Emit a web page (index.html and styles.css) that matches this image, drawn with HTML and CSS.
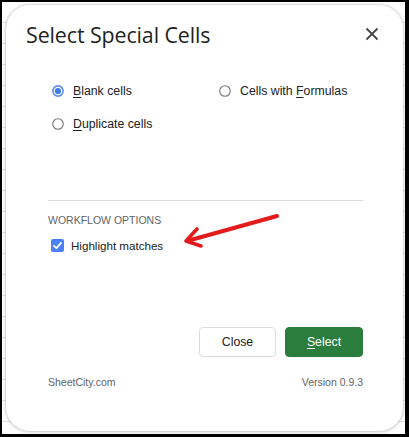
FILE: index.html
```html
<!DOCTYPE html>
<html>
<head>
<meta charset="utf-8">
<link rel="stylesheet" href="styles.css">
</head>
<body>
<div class="sheet">
  <div class="dialog">
    <div class="header">
      <h1 class="title">Select Special Cells</h1>
      <button class="close-x" aria-label="Close">
        <svg width="14" height="14" viewBox="0 0 14 14"><path d="M1.5 1.5 L12.5 12.5 M12.5 1.5 L1.5 12.5" stroke="#444746" stroke-width="1.8" fill="none"/></svg>
      </button>
    </div>
    <div class="body">
      <div class="options">
        <label class="opt">
          <svg class="radio" width="12" height="12" viewBox="0 0 12 12"><circle cx="6" cy="6" r="5.1" fill="#fff" stroke="#5b8def" stroke-width="1.6"/><circle cx="6" cy="6" r="3.1" fill="#3f7cf2"/></svg>
          <span><u>B</u>lank cells</span>
        </label>
        <label class="opt">
          <svg class="radio" width="12" height="12" viewBox="0 0 12 12"><circle cx="6" cy="6" r="5.3" fill="#fff" stroke="#767676" stroke-width="1.1"/></svg>
          <span>Cells with <u>F</u>ormulas</span>
        </label>
        <label class="opt">
          <svg class="radio" width="12" height="12" viewBox="0 0 12 12"><circle cx="6" cy="6" r="5.3" fill="#fff" stroke="#767676" stroke-width="1.1"/></svg>
          <span><u>D</u>uplicate cells</span>
        </label>
      </div>
      <div class="divider"></div>
      <div class="section-label">WORKFLOW OPTIONS</div>
      <label class="check-row">
        <svg class="check" width="13" height="13" viewBox="0 0 13 13"><rect x="0" y="0" width="13" height="13" rx="2" fill="#4a80f5"/><path d="M3 6.8 L5.4 9.1 L10 3.9" stroke="#fff" stroke-width="1.8" fill="none" stroke-linecap="round" stroke-linejoin="round"/></svg>
        <span>Highlight matches</span>
      </label>
      <div class="actions">
        <button class="btn btn-close">Close</button>
        <button class="btn btn-select"><u>S</u>elect</button>
      </div>
      <div class="footer">
        <span>SheetCity.com</span>
        <span>Version 0.9.3</span>
      </div>
    </div>
    <svg class="arrow" width="104" height="46" viewBox="0 0 104 46">
      <path d="M97 8 L7 33" stroke="#e31b1b" stroke-width="4" stroke-linecap="round" fill="none"/>
      <path d="M17 21 L6 33 L21 38" stroke="#e31b1b" stroke-width="3.6" stroke-linecap="round" stroke-linejoin="round" fill="none"/>
    </svg>
  </div>
</div>
</body>
</html>
```

FILE: styles.css
```css
html, body {
  margin: 0;
  padding: 0;
  background: #000;
}
body {
  width: 409px;
  height: 437px;
  overflow: hidden;
  font-family: "Liberation Sans", Arial, sans-serif;
}
.sheet {
  margin: 2px 4px 3px 2px;
  width: 403px;
  height: 432px;
  box-sizing: border-box;
  padding: 3px 2px 3px 4px;
  background-color: #fff;
  background-image: repeating-linear-gradient(to bottom, transparent 0, transparent 20px, #e2e2e2 20px, #e2e2e2 21px);
}
.dialog {
  position: relative;
  width: 397px;
  height: 426px;
  background: #fff;
  border-radius: 24px;
  box-shadow: 0 0 3px rgba(0,0,0,0.25), 0 1px 4px rgba(0,0,0,0.12);
  display: flex;
  flex-direction: column;
}
.header {
  height: 58px;
  display: flex;
  align-items: center;
  justify-content: space-between;
  padding: 0 24px 0 20px;
}
.title {
  margin: 0;
  font-family: "Open Sans", sans-serif;
  font-weight: 400;
  font-size: 21.4px;
  color: #1f1f1f;
  letter-spacing: -0.1px;
}
.close-x {
  border: 0;
  background: none;
  padding: 0;
  width: 14px;
  height: 14px;
  display: flex;
}
.body {
  padding: 0 40px 0 42px;
  display: flex;
  flex-direction: column;
  flex: 1;
}
.options {
  margin: 18px 0 0 4px;
  display: grid;
  grid-template-columns: 167px 1fr;
  row-gap: 13px;
}
.opt {
  display: flex;
  align-items: center;
  gap: 9px;
  height: 20px;
  font-size: 12.3px;
  color: #202124;
}
.opt u, .btn u {
  text-underline-offset: 2px;
}
.radio {
  flex: none;
}
.divider {
  margin-top: 66px;
  height: 1px;
  background: #dadce0;
}
.section-label {
  margin-top: 12px;
  font-size: 10.5px;
  line-height: 14px;
  letter-spacing: 0;
  color: #5f6368;
}
.check-row {
  margin: 9px 0 0 3px;
  display: flex;
  align-items: center;
  gap: 7px;
  height: 18px;
  font-size: 11.6px;
  color: #202124;
}
.check {
  flex: none;
}
.actions {
  margin-top: 73px;
  display: flex;
  justify-content: flex-end;
  gap: 9px;
}
.btn {
  height: 30px;
  border-radius: 4px;
  font-family: "Liberation Sans", Arial, sans-serif;
  font-size: 12.3px;
  padding: 0;
}
.btn-close {
  width: 77px;
  background: #fff;
  border: 1px solid #dadce0;
  color: #202124;
}
.btn-select {
  width: 78px;
  background: #2b7d3d;
  border: 1px solid #2b7d3d;
  color: #fff;
}
.footer {
  margin-top: 18px;
  display: flex;
  justify-content: space-between;
  font-size: 10.5px;
  line-height: 14px;
  color: #5f6368;
}
.arrow {
  position: absolute;
  left: 174px;
  top: 203px;
}
```
